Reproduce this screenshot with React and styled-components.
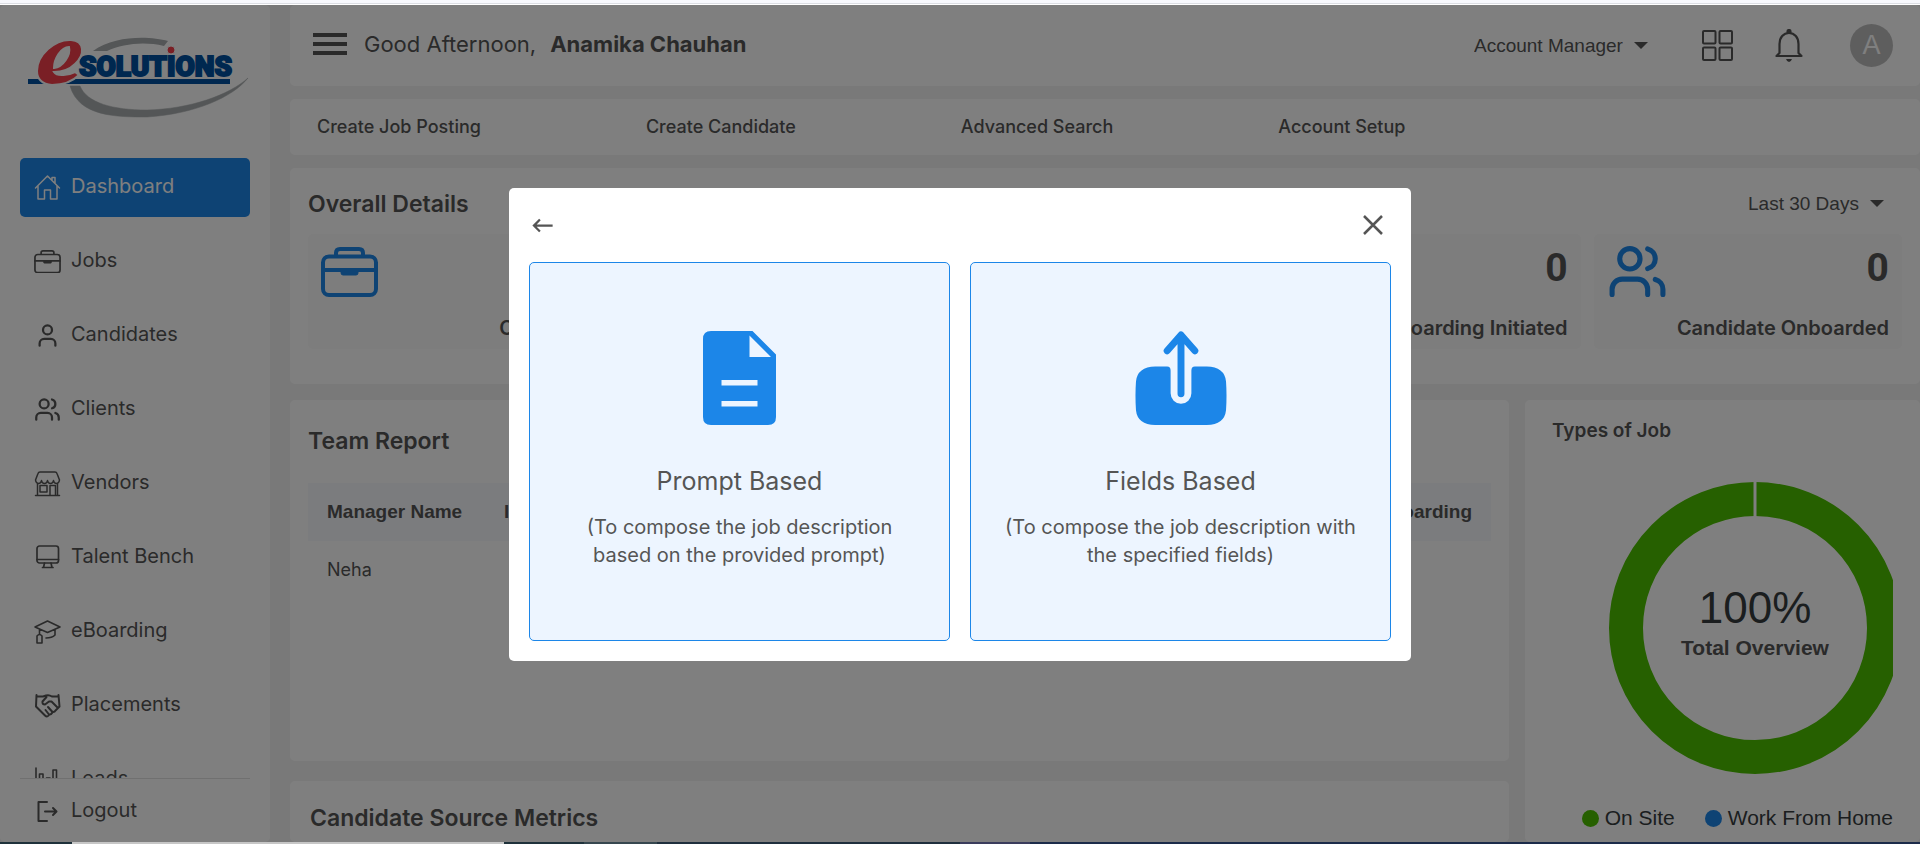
import React from "react";
import styled, { createGlobalStyle } from "styled-components";
import { User, Users } from "lucide-react";

const ui = `Inter, "Open Sans", sans-serif`;
const arial = `"Liberation Sans", Arial, sans-serif`;
const ink = "#555555";
const blue = "#1c86e8";

const GlobalStyle = createGlobalStyle`
  *, *::before, *::after { box-sizing: border-box; }
  body { margin: 0; background: #f3f3f3; color: ${ink}; font-family: ${ui}; }
  h1, h2, h3, p, ul { margin: 0; padding: 0; }
  button, select { font: inherit; color: inherit; background: none; border: 0; padding: 0; }
  a { color: inherit; text-decoration: none; }
  svg { display: block; flex: none; }
`;

const Screen = styled.div`
  display: flex;
  flex-direction: column;
  height: 100vh;
  overflow: hidden;
`;

const TopStrip = styled.div`
  flex: none;
  height: 5px;
  background: linear-gradient(#f7f8fd 3px, #dcdee4 3px 4px, #ffffff 4px);
`;

const BottomStrip = styled.div`
  flex: none;
  height: 2px;
  background: linear-gradient(90deg, #1f323b 72px, #c6c6c6 72px 504px, #1f323b 504px 584px, #36474f 584px 657px, #1f2f3d 657px 960px, #3a3c5c 960px 1030px, #1c2b4a 1030px);
`;

const Body = styled.div`
  position: relative;
  display: flex;
  gap: 20px;
  flex: 1;
  min-height: 0;
`;

const Sidebar = styled.aside`
  display: flex;
  flex-direction: column;
  flex: none;
  width: 270px;
  padding: 0 20px;
  background: #fff;
  border-radius: 5px;
`;

const LogoBox = styled.div`
  flex: none;
  height: 153px;
  padding: 28px 0 0 5px;
`;

const Menu = styled.nav`
  display: flex;
  flex-direction: column;
  gap: 15px;
  flex: 1;
  min-height: 0;
  overflow: hidden;
`;

const MenuItem = styled.a`
  display: flex;
  align-items: center;
  gap: 10px;
  flex: none;
  height: 59px;
  padding-left: 14px;
  border-radius: 5px;
  font-size: 20px;
  background: ${(p) => (p.$active ? blue : "transparent")};
  color: ${(p) => (p.$active ? "#fff" : ink)};
`;

const MenuText = styled.span`
  padding-bottom: 3px;
`;

const SidebarFoot = styled.div`
  flex: none;
  height: 64px;
  padding-top: 3px;
  border-top: 1px solid #e0e0e0;
`;

const Main = styled.main`
  display: flex;
  flex-direction: column;
  gap: 13px;
  flex: 1;
  min-width: 0;
`;

const Card = styled.section`
  background: #fff;
  border-radius: 5px;
`;

const Header = styled(Card)`
  display: flex;
  align-items: center;
  flex: none;
  height: 81px;
  padding: 0 27px 4px 23px;
`;

const MenuButton = styled.button`
  margin-right: 17px;
`;

const Greeting = styled.h1`
  display: flex;
  gap: 14px;
  flex: 1;
  font-size: 22px;
  font-weight: 400;
`;

const Tools = styled.div`
  display: flex;
  align-items: center;
  padding-top: 4px;
`;

const IconButton = styled.button`
  margin-left: ${(p) => p.$gap}px;
`;

const Avatar = styled.button`
  width: 43px;
  height: 43px;
  margin-left: 47px;
  border-radius: 50%;
  background: #bdbdbd;
  color: #fff;
  font-family: ${arial};
  font-size: 27px;
`;

const Picker = styled.label`
  display: flex;
  align-items: center;
  gap: 11px;
  font-family: ${arial};
  font-size: 19px;

  select {
    appearance: none;
  }
`;

const QuickLinks = styled(Card)`
  display: flex;
  align-items: center;
  gap: 165px;
  flex: none;
  height: 56px;
  padding: 0 27px 2px;
  font-size: 18px;
  font-weight: 500;
`;

const Overall = styled(Card)`
  flex: none;
  height: 216px;
  padding: 0 18px;
`;

const TitleRow = styled.div`
  display: flex;
  align-items: center;
  justify-content: space-between;
  height: 66px;
  padding: 5px 18px 0 0;
`;

const Heading = styled.h2`
  font-size: 23px;
  font-weight: 600;
  line-height: 26px;
`;

const Tiles = styled.div`
  display: grid;
  grid-template-columns: repeat(5, 1fr);
  gap: 13px;
`;

const Tile = styled.div`
  display: flex;
  flex-direction: column;
  justify-content: space-between;
  height: 115px;
  padding: 12px 13px 7px;
  border-radius: 5px;
  background: #fafafa;
`;

const TileTop = styled.div`
  display: flex;
  align-items: center;
  justify-content: space-between;
  height: 51px;
  color: ${blue};
`;

const Count = styled.strong`
  align-self: flex-start;
  color: ${ink};
  font-family: Roboto, sans-serif;
  font-size: 39px;
  line-height: 44px;
`;

const TileLabel = styled.span`
  font-size: 20px;
  font-weight: 600;
  text-align: right;
  line-height: 28px;
`;

const Lower = styled.div`
  display: grid;
  grid-template-columns: 1219fr 395fr;
  gap: 16px;
  flex: 1;
  min-height: 0;
  padding-top: 3px;
`;

const Column = styled.div`
  display: flex;
  flex-direction: column;
  gap: 20px;
  min-height: 0;
`;

const TeamReport = styled(Card)`
  flex: none;
  height: 361px;
  padding: 28px 18px 0;
`;

const Table = styled.table`
  width: 100%;
  margin-top: 29px;
  border-collapse: collapse;
  text-align: left;

  th {
    height: 58px;
    padding: 0 19px;
    background: #f7f9fd;
    font-family: ${arial};
    font-size: 19px;
  }
  th:first-child {
    width: 177px;
    white-space: nowrap;
  }
  th:last-child {
    text-align: right;
  }
  td {
    height: 56px;
    padding: 0 19px;
    font-size: 18px;
  }
`;

const Metrics = styled(Card)`
  flex: 1;
  padding: 24px 20px 0;
`;

const JobTypes = styled(Card)`
  display: flex;
  flex-direction: column;
  min-height: 0;
  padding: 19px 27px 0;
`;

const SmallHeading = styled.h2`
  font-size: 19px;
  font-weight: 600;
  line-height: 24px;
`;

const Chart = styled.svg`
  width: 100%;
  height: 294px;
  margin-top: 38px;
  overflow: hidden;
`;

const Legend = styled.ul`
  display: flex;
  justify-content: flex-end;
  gap: 30px;
  margin: 29px 0 0;
  list-style: none;
  white-space: nowrap;
  font-family: ${arial};
  font-size: 21px;
  line-height: 28px;
  color: #373d3f;
`;

const LegendItem = styled.li`
  display: flex;
  align-items: center;
  gap: 6px;

  &::before {
    content: "";
    width: 17px;
    height: 17px;
    border-radius: 50%;
    background: ${(p) => p.$color};
  }
`;

const Overlay = styled.div`
  position: absolute;
  inset: 0;
  display: flex;
  align-items: center;
  justify-content: center;
  padding-top: 2px;
  background: rgba(0, 0, 0, 0.5);
`;

const Modal = styled.div`
  width: 902px;
  padding: 0 20px 20px;
  border-radius: 5px;
  background: #fff;
`;

const ModalHead = styled.div`
  display: flex;
  align-items: center;
  justify-content: space-between;
  height: 74px;
`;

const Choices = styled.div`
  display: grid;
  grid-template-columns: 1fr 1fr;
  gap: 20px;
`;

const Choice = styled.button`
  display: flex;
  flex-direction: column;
  align-items: center;
  height: 379px;
  padding: 68px 32px 0;
  border: 1px solid ${blue};
  border-radius: 5px;
  background: #edf5ff;
`;

const ChoiceTitle = styled.span`
  margin-top: 38px;
  font-size: 25px;
  line-height: 36px;
`;

const ChoiceText = styled.span`
  margin-top: 14px;
  font-size: 20px;
  line-height: 28px;
`;

const line = { fill: "none", stroke: "currentColor", strokeLinecap: "round", strokeLinejoin: "round" };

const Logo = () => (
  <svg width="225" height="90" viewBox="0 0 225 90" role="img" aria-label="eSolutions">
    <path d="M68 18C90 2 125 3 143 8L139 13C118 8 98 11 82 18Z" fill="#a8acae" />
    <path d="M45 53C54 84 92 84 122 84C170 81 208 64 223 45C204 62 165 76 122 77C88 77 62 70 55 53Z" fill="#a8acae" stroke="#a8acae" strokeWidth="0.500" />
    <rect x="3" y="46" width="202" height="5" fill="#0050a0" />
    <text x="54" y="43" fontFamily="Roboto, sans-serif" fontSize="28" fontWeight="900" fill="#0050a0" stroke="#0050a0" strokeWidth="2">SOLUTIONS</text>
    <circle cx="146" cy="17" r="4" fill="#f43e4a" stroke="#fff" strokeWidth="1" />
    <path fillRule="evenodd" d="M12 38C12 22 30 6 46 7C60 8 60 22 50 31C44 37 36 39 29 39C32 44 44 42 50 39L54 42C46 50 36 52 27 52C17 51 12 46 12 38ZM29 35C38 34 46 22 44 14C36 14 29 26 29 35Z" fill="#f43e4a" stroke="#fff" strokeWidth="2" />
  </svg>
);

const HomeIcon = () => (
  <svg width="27" height="27" viewBox="0 0 27 27" {...line} strokeWidth="1.500">
    <path d="M1.500 14L13.500 2L25.500 14M4 12V25H10.500V16H16.500V25H23V12M18 6V3.500H21V9.500" />
  </svg>
);

const BriefcaseIcon = ({ size = 27, weight = 3.6 }) => (
  <svg width={size} height={(size * 50) / 57} viewBox="0 0 57 50" {...line} strokeWidth={weight}>
    <rect x="2" y="9.500" width="53" height="38.500" rx="6" />
    <path d="M15 9V6Q15 2 19 2H38Q42 2 42 6V9M2 23H55" />
    <path d="M20 23H37V26Q37 28 35 28H22Q20 28 20 26Z" fill="currentColor" strokeWidth="1" />
  </svg>
);

const StoreIcon = () => (
  <svg width="27" height="27" viewBox="0 0 27 27" {...line} strokeWidth="1.500">
    <path d="M1.500 25.500H25.500M3.500 14V25M23.500 14V25M6 2H21Q22.500 2 23 3.500L25.500 10Q25 13.500 22.500 13.500Q20 13.500 19.500 10.500Q19 13.500 16.500 13.500Q14 13.500 13.500 10.500Q13 13.500 10.500 13.500Q8 13.500 7.500 10.500Q7 13.500 4.500 13.500Q2 13.500 1.500 10L4 3.500Q4.500 2 6 2Z" />
    <path d="M6 15.500H13V22H6ZM16 25V15.500H21.500V25" />
  </svg>
);

const MonitorIcon = () => (
  <svg width="27" height="27" viewBox="0 0 27 27" {...line} strokeWidth="1.700">
    <rect x="3" y="2" width="21.500" height="17" rx="2.500" />
    <path d="M3 15.500H24.500M10.500 19L9.500 23.500M17 19L18 23.500M8.500 23.500H19" />
  </svg>
);

const CapIcon = () => (
  <svg width="27" height="27" viewBox="0 0 27 27" {...line} strokeWidth="1.600">
    <path d="M1 9L13.500 3L26 9L13.500 14.500ZM5.500 11V16M21 11.500V17Q18 20 12 20" />
    <path d="M3 18Q5.500 15 8 18V25H3Z" />
  </svg>
);

const HandshakeIcon = () => (
  <svg width="27" height="27" viewBox="0 0 27 27" {...line} strokeWidth="2">
    <path d="M2.500 3L2 14.500L11 23.500Q13 25.500 14.500 23.500L15 22.500Q17 23 18 21L18.500 20Q20.500 20.500 21.500 18.500L25.500 14.500L24.500 3M2.500 4.500H9L12 3.500Q15 2.500 18 4.500H24.500M12.500 5L8.500 9.500Q8 12.500 11 12.500L15 9.500H17.500L24 16M14 15L18.500 20M11.500 18L15 22.500" />
  </svg>
);

const ChartIcon = () => (
  <svg width="27" height="27" viewBox="0 0 27 27" {...line} strokeWidth="1.600">
    <path d="M2 2V25H25M5.500 25V8H9V25M12.500 25V12H16V25M19 25V4H22.500V25" />
  </svg>
);

const LogoutIcon = () => (
  <svg width="27" height="27" viewBox="0 0 27 27" {...line} strokeWidth="2">
    <path d="M13 4H4.500V23H13M11 13.500H22M19 10L22.500 13.500L19 17" />
  </svg>
);

const Caret = () => (
  <svg width="14" height="7" viewBox="0 0 14 7">
    <path d="M0 0H14L7 7Z" fill="currentColor" />
  </svg>
);

const AppsIcon = () => (
  <svg width="31" height="31" viewBox="0 0 31 31" {...line} strokeWidth="2">
    <rect x="1" y="1" width="12.500" height="12.500" rx="1" />
    <rect x="17.500" y="1" width="12.500" height="12.500" rx="1" />
    <rect x="1" y="17.500" width="12.500" height="12.500" rx="1" />
    <rect x="17.500" y="17.500" width="12.500" height="12.500" rx="1" />
  </svg>
);

const BellIcon = () => (
  <svg width="28" height="33" viewBox="0 0 28 33" {...line} strokeWidth="2.200">
    <path d="M1.500 27H26.500L23.500 24V15C23.500 8.500 19.500 4 14 4C8.500 4 4.500 8.500 4.500 15V24Z" />
    <circle cx="14" cy="2.500" r="1.500" fill="currentColor" />
    <path d="M11 30H17Q16 33 14 33Q12 33 11 30Z" fill="currentColor" stroke="none" />
  </svg>
);

const DocumentIcon = () => (
  <svg width="73" height="94" viewBox="0 0 73 94">
    <path fillRule="evenodd" fill={blue} d="M8 0H49.500L73 23.500V86Q73 94 65 94H8Q0 94 0 86V8Q0 0 8 0ZM46.500 4.500V26H68ZM18.500 49V54.500H54.500V49ZM18.500 70V75.500H54.500V70Z" />
  </svg>
);

const UploadIcon = () => (
  <svg width="92" height="94" viewBox="0 0 92 95">
    <path fill={blue} d="M20 36H32Q35.500 36 35.500 40V63A10.500 10.500 0 0 0 56.500 63V40Q56.500 36 60 36H72Q90 36.500 91.500 51Q92.500 65 91.500 80Q90 94.500 72 95H20Q2 94.500 0.500 80Q-0.500 65 0.500 51Q2 36.500 20 36Z" />
    <path d="M46 5V63.500M32 20L46 4L60 20" fill="none" stroke={blue} strokeWidth="7" strokeLinecap="round" strokeLinejoin="round" />
  </svg>
);

const menu = [
  ["Dashboard", <HomeIcon />],
  ["Jobs", <BriefcaseIcon />],
  ["Candidates", <User size={27} />],
  ["Clients", <Users size={27} />],
  ["Vendors", <StoreIcon />],
  ["Talent Bench", <MonitorIcon />],
  ["eBoarding", <CapIcon />],
  ["Placements", <HandshakeIcon />],
  ["Leads", <ChartIcon />],
];

const StatTile = ({ icon, count, label }) => (
  <Tile>
    <TileTop>
      {icon}
      <Count>{count}</Count>
    </TileTop>
    <TileLabel>{label}</TileLabel>
  </Tile>
);

export default function App() {
  return (
    <>
      <GlobalStyle />
      <Screen>
        <TopStrip />
        <Body>
          <Sidebar>
            <LogoBox>
              <Logo />
            </LogoBox>
            <Menu>
              {menu.map(([label, icon], i) => (
                <MenuItem key={label} href="#" $active={i === 0}>
                  {icon}
                  <MenuText>{label}</MenuText>
                </MenuItem>
              ))}
            </Menu>
            <SidebarFoot>
              <MenuItem href="#">
                <LogoutIcon />
                <MenuText>Logout</MenuText>
              </MenuItem>
            </SidebarFoot>
          </Sidebar>

          <Main>
            <Header as="header">
              <MenuButton aria-label="Toggle menu">
                <svg width="34" height="22" viewBox="0 0 34 22" fill="currentColor">
                  <path d="M0 0H34V4H0ZM0 9H34V13H0ZM0 18H34V22H0Z" />
                </svg>
              </MenuButton>
              <Greeting>
                Good Afternoon, <b>Anamika Chauhan</b>
              </Greeting>
              <Tools>
                <Picker>
                  <select aria-label="Role">
                    <option>Account Manager</option>
                  </select>
                  <Caret />
                </Picker>
                <IconButton $gap={54} aria-label="Apps">
                  <AppsIcon />
                </IconButton>
                <IconButton $gap={42} aria-label="Notifications">
                  <BellIcon />
                </IconButton>
                <Avatar>A</Avatar>
              </Tools>
            </Header>

            <QuickLinks as="nav">
              <a href="#">Create Job Posting</a>
              <a href="#">Create Candidate</a>
              <a href="#">Advanced Search</a>
              <a href="#">Account Setup</a>
            </QuickLinks>

            <Overall>
              <TitleRow>
                <Heading>Overall Details</Heading>
                <Picker>
                  <select aria-label="Period">
                    <option>Last 30 Days</option>
                  </select>
                  <Caret />
                </Picker>
              </TitleRow>
              <Tiles>
                <StatTile icon={<BriefcaseIcon size={57} weight={4} />} label="Open Jobs" />
                <Tile />
                <Tile />
                <StatTile count="0" icon={<Users size={61} />} label="Onboarding Initiated" />
                <StatTile count="0" icon={<Users size={61} />} label="Candidate Onboarded" />
              </Tiles>
            </Overall>

            <Lower>
              <Column>
                <TeamReport>
                  <Heading>Team Report</Heading>
                  <Table>
                    <thead>
                      <tr>
                        <th>Manager Name</th>
                        <th>Interview</th>
                        <th>Onboarding</th>
                      </tr>
                    </thead>
                    <tbody>
                      <tr>
                        <td>Neha</td>
                        <td />
                        <td />
                      </tr>
                    </tbody>
                  </Table>
                </TeamReport>
                <Metrics>
                  <Heading>Candidate Source Metrics</Heading>
                </Metrics>
              </Column>
              <JobTypes>
                <SmallHeading>Types of Job</SmallHeading>
                <Chart viewBox="0 0 341 294" preserveAspectRatio="xMidYMid meet">
                  <circle cx="203" cy="147" r="129" fill="none" stroke="#4cc000" strokeWidth="34" />
                  <path d="M203 0V36" stroke="#fff" strokeWidth="3" />
                  <text x="203" y="142" textAnchor="middle" fontFamily={arial} fontSize="44" fill="#373d3f">100%</text>
                  <text x="203" y="174" textAnchor="middle" fontFamily={arial} fontSize="21" fontWeight="700" fill={ink}>Total Overview</text>
                </Chart>
                <Legend>
                  <LegendItem $color="#4cc000">On Site</LegendItem>
                  <LegendItem $color={blue}>Work From Home</LegendItem>
                </Legend>
              </JobTypes>
            </Lower>
          </Main>

          <Overlay>
            <Modal role="dialog" aria-modal="true" aria-label="Choose how to compose the job description">
              <ModalHead>
                <button aria-label="Back">
                  <svg width="27" height="27" viewBox="0 0 24 24" fill="currentColor">
                    <path d="M21 11H6.830l3.580-3.590L9 6l-6 6 6 6 1.410-1.410L6.830 13H21z" />
                  </svg>
                </button>
                <button aria-label="Close">
                  <svg width="36" height="36" viewBox="0 0 36 36" stroke="currentColor" strokeWidth="2.500">
                    <path d="M9 9L27 27M27 9L9 27" />
                  </svg>
                </button>
              </ModalHead>
              <Choices>
                <Choice>
                  <DocumentIcon />
                  <ChoiceTitle>Prompt Based</ChoiceTitle>
                  <ChoiceText>(To compose the job description based on the provided prompt)</ChoiceText>
                </Choice>
                <Choice>
                  <UploadIcon />
                  <ChoiceTitle>Fields Based</ChoiceTitle>
                  <ChoiceText>(To compose the job description with the specified fields)</ChoiceText>
                </Choice>
              </Choices>
            </Modal>
          </Overlay>
        </Body>
        <BottomStrip />
      </Screen>
    </>
  );
}
